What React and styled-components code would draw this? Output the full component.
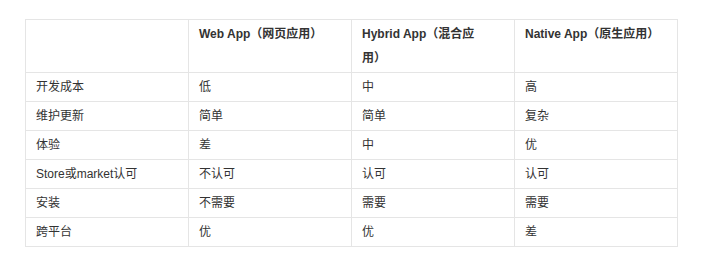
import React from "react";
import styled, { createGlobalStyle } from "styled-components";

const GlobalStyle = createGlobalStyle`
  html, body {
    margin: 0;
    padding: 0;
    background: #fff;
  }
  body {
    font-family: "Liberation Sans", Arial, "Noto Sans CJK SC", sans-serif;
    color: #333;
  }
`;

const Page = styled.div`
  padding: 19px 0 0 25px;
`;

const Table = styled.table`
  width: 653px;
  border-collapse: collapse;
  table-layout: fixed;
  font-size: 12px;
  line-height: 24px;
`;

const Col = styled.col`
  width: 163px;
`;

const HeadCell = styled.th`
  border: 1px solid #e5e5e5;
  padding: 2px 10px;
  text-align: left;
  vertical-align: top;
  font-weight: bold;
  color: #333;
  white-space: pre-line;
`;

const Cell = styled.td`
  border: 1px solid #e5e5e5;
  padding: 2px 10px;
  text-align: left;
  vertical-align: middle;
  color: #333;
`;

// the hybrid header wraps in the original column width
const headers = ["", "Web App（网页应用）", "Hybrid App（混合应\n用）", "Native App（原生应用）"];

const rows = [
  ["开发成本", "低", "中", "高"],
  ["维护更新", "简单", "简单", "复杂"],
  ["体验", "差", "中", "优"],
  ["Store或market认可", "不认可", "认可", "认可"],
  ["安装", "不需要", "需要", "需要"],
  ["跨平台", "优", "优", "差"],
];

export default function App() {
  return (
    <>
      <GlobalStyle />
      <Page>
        <Table>
          <colgroup>
            {headers.map((_, i) => (
              <Col key={i} />
            ))}
          </colgroup>
          <thead>
            <tr>
              {headers.map((h, i) => (
                <HeadCell key={i}>{h}</HeadCell>
              ))}
            </tr>
          </thead>
          <tbody>
            {rows.map((row, r) => (
              <tr key={r}>
                {row.map((c, i) => (
                  <Cell key={i}>{c}</Cell>
                ))}
              </tr>
            ))}
          </tbody>
        </Table>
      </Page>
    </>
  );
}
